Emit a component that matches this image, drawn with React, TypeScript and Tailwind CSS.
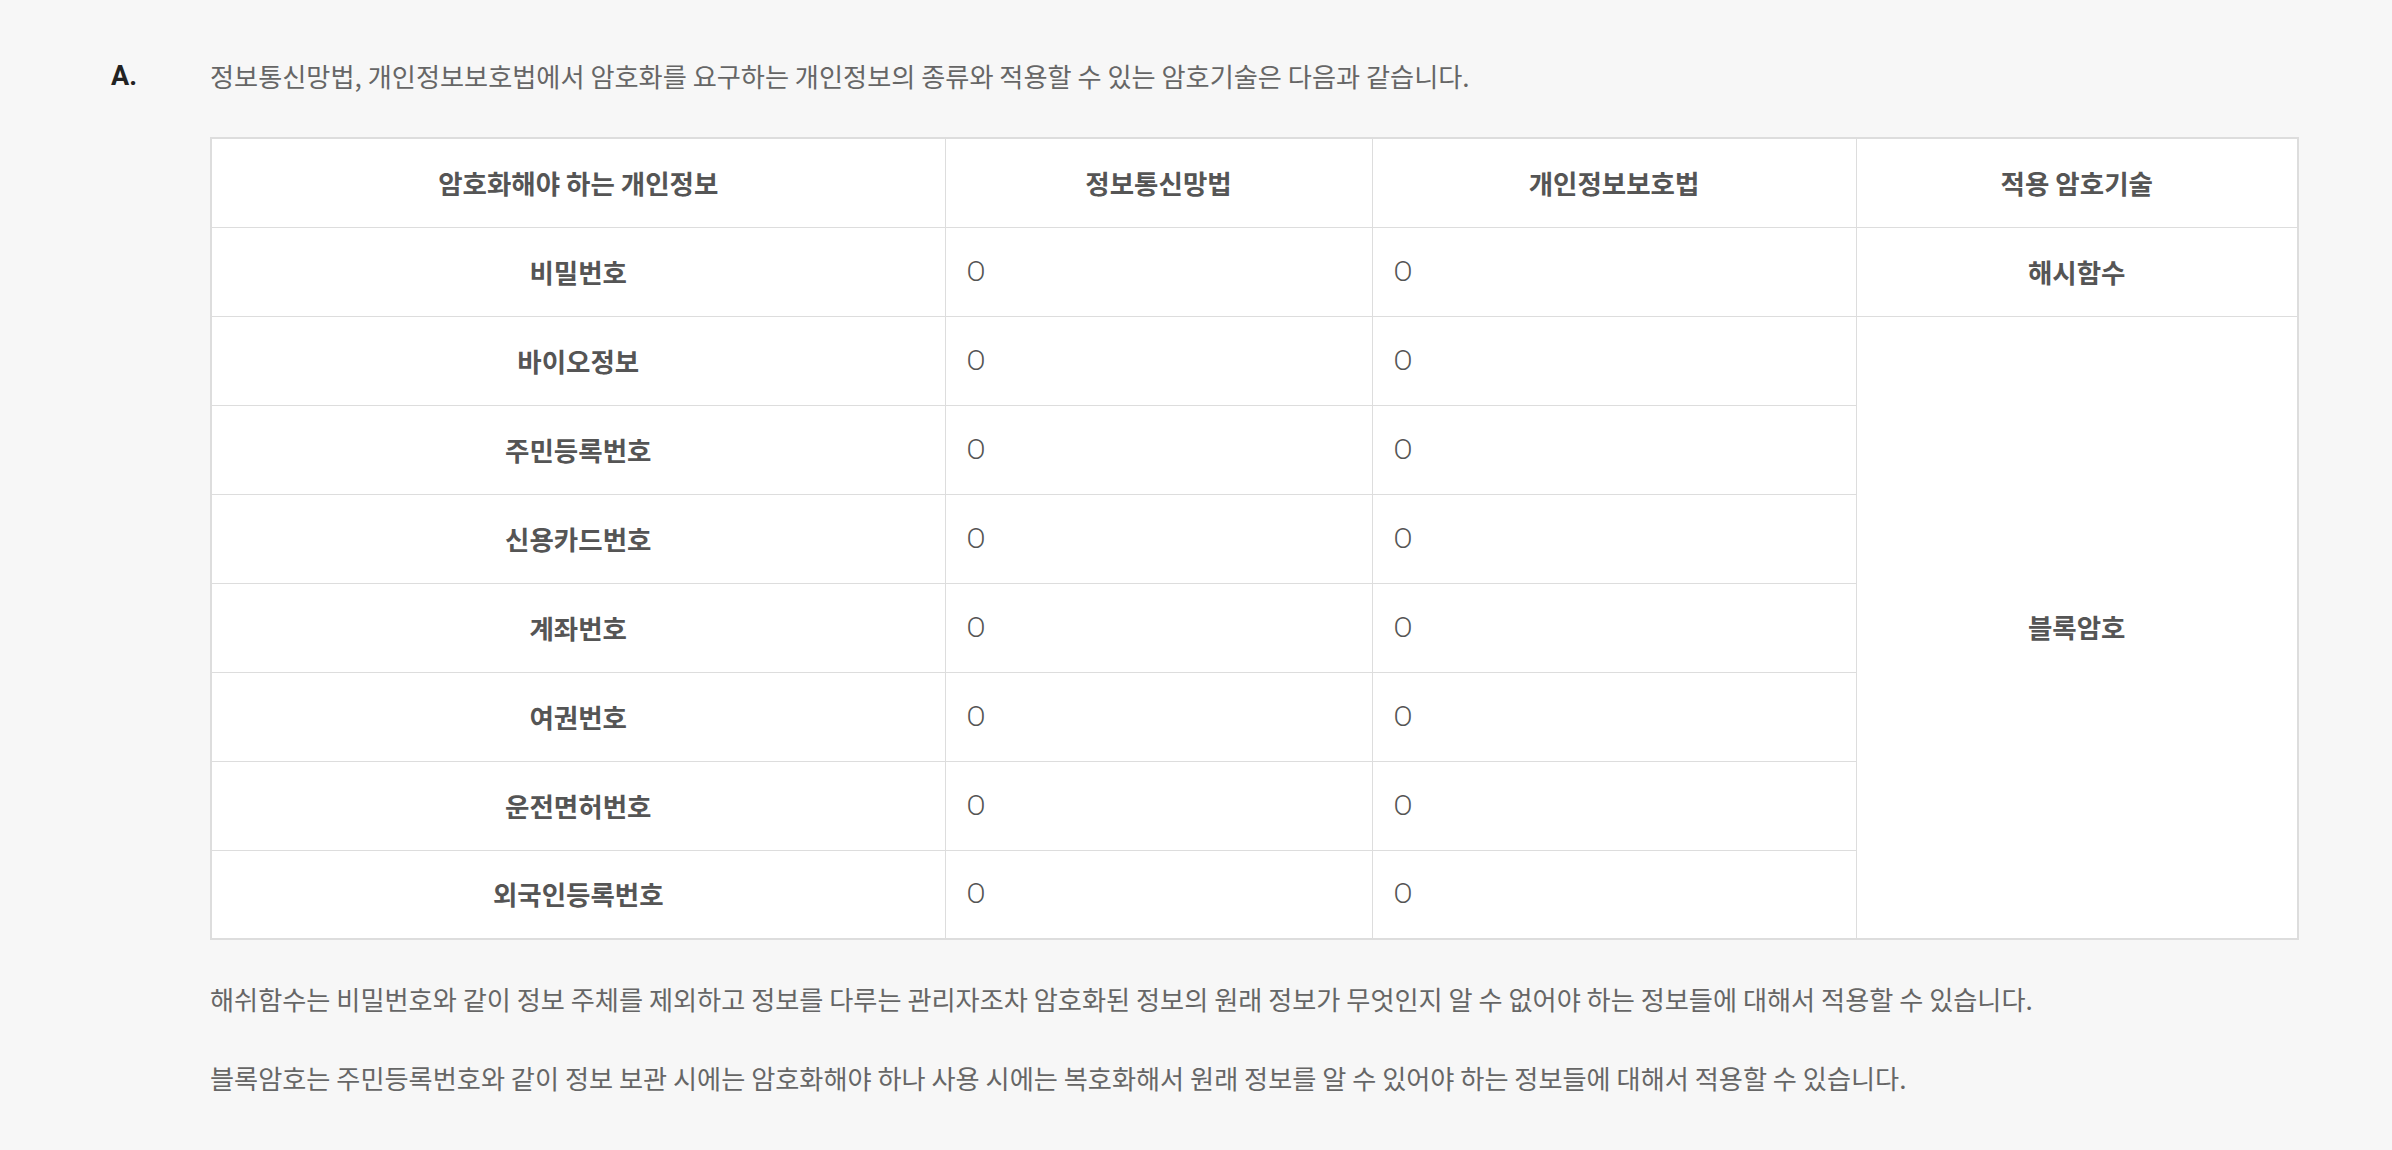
const rows = [
  '비밀번호',
  '바이오정보',
  '주민등록번호',
  '신용카드번호',
  '계좌번호',
  '여권번호',
  '운전면허번호',
  '외국인등록번호',
];

const cell = 'border border-[#dddddd] h-[89px] p-0';

export default function App() {
  return (
    <div
      className="min-h-screen bg-[#f7f7f7] pt-[58px] pl-[111px] pr-[95px]"
      style={{ fontFamily: '"Noto Sans CJK KR", "Noto Sans", sans-serif' }}
    >
      <div className="flex">
        <div className="w-[99px] shrink-0 text-[27px] leading-[36px] font-bold text-[#222222] font-['Roboto','Noto_Sans',sans-serif]">
          A.
        </div>
        <div className="flex-1">
          <p className="text-[26.2px] leading-[36px] text-[#666666]">
            정보통신망법, 개인정보보호법에서 암호화를 요구하는 개인정보의 종류와 적용할 수 있는 암호기술은 다음과 같습니다.
          </p>

          <table className="mt-[43px] w-[2087px] table-fixed border-collapse border-2 border-[#dddddd] bg-white text-[26.5px]">
            <colgroup>
              <col className="w-[734px]" />
              <col className="w-[427px]" />
              <col className="w-[484px]" />
              <col className="w-[442px]" />
            </colgroup>
            <thead>
              <tr className="font-bold text-[#555555]">
                <th className={cell}>암호화해야 하는 개인정보</th>
                <th className={cell}>정보통신망법</th>
                <th className={cell}>개인정보보호법</th>
                <th className={cell}>적용 암호기술</th>
              </tr>
            </thead>
            <tbody>
              {rows.map((name, i) => (
                <tr key={name}>
                  <td className={`${cell} text-center font-bold text-[#555555]`}>{name}</td>
                  <td className={`${cell} pl-[21px] text-[28px] text-[#555555] font-['Roboto',sans-serif] font-light`}>O</td>
                  <td className={`${cell} pl-[21px] text-[28px] text-[#555555] font-['Roboto',sans-serif] font-light`}>O</td>
                  {i === 0 && (
                    <td className={`${cell} text-center font-bold text-[#555555]`}>해시함수</td>
                  )}
                  {i === 1 && (
                    <td rowSpan={7} className={`${cell} text-center font-bold text-[#555555]`}>
                      블록암호
                    </td>
                  )}
                </tr>
              ))}
            </tbody>
          </table>

          <p className="mt-[41px] text-[26.2px] leading-[36px] text-[#666666]">
            해쉬함수는 비밀번호와 같이 정보 주체를 제외하고 정보를 다루는 관리자조차 암호화된 정보의 원래 정보가 무엇인지 알 수 없어야 하는 정보들에 대해서 적용할 수 있습니다.
          </p>
          <p className="mt-[43px] text-[26.2px] leading-[36px] text-[#666666]">
            블록암호는 주민등록번호와 같이 정보 보관 시에는 암호화해야 하나 사용 시에는 복호화해서 원래 정보를 알 수 있어야 하는 정보들에 대해서 적용할 수 있습니다.
          </p>
        </div>
      </div>
    </div>
  );
}
